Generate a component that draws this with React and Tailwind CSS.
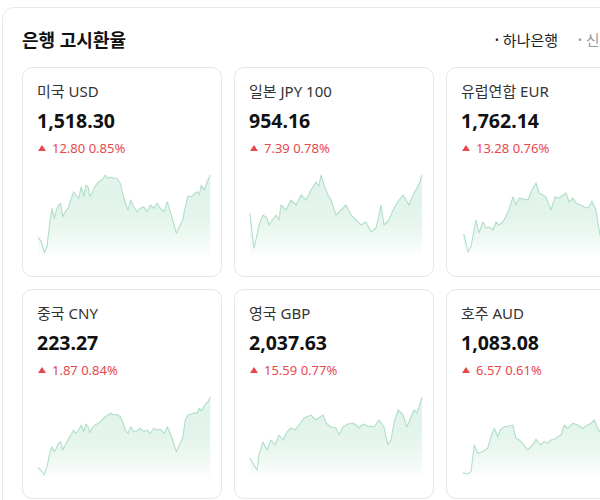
import React from "react";

const T = (pts, fx, fy) => pts.map(([x, y]) => [fx(x), fy(y)]);

const usdZ = [[108,232],[118,245],[127,278],[135,260],[143,190],[150,145],[157,175],[163,150],[170,135],[176,130],[182,170],[190,155],[198,145],[206,120],[215,95],[222,105],[230,115],[238,80],[245,110],[252,75],[258,80],[264,110],[270,100],[278,80],[290,65],[300,60],[310,45],[318,55],[326,52],[334,55],[345,55],[355,70],[362,100],[370,130],[378,150],[386,120],[395,140],[405,155],[415,145],[425,140],[435,155],[445,135],[455,145],[465,130],[475,145],[487,155],[496,125],[505,155],[515,190],[523,220],[532,200],[542,180],[550,140],[558,108],[568,110],[578,100],[586,95],[592,105],[598,75],[605,90],[612,75],[618,60],[625,45]];

const cnyZ = [[108,562],[118,572],[127,585],[135,560],[143,520],[150,500],[157,515],[163,505],[170,490],[176,485],[182,510],[190,495],[198,480],[206,465],[215,450],[222,460],[230,450],[238,435],[245,455],[252,432],[258,440],[264,458],[270,445],[278,435],[290,430],[300,420],[310,410],[318,405],[326,400],[334,405],[345,403],[355,410],[362,425],[370,450],[378,460],[386,440],[395,455],[405,452],[415,445],[425,455],[435,450],[445,460],[455,445],[465,450],[475,448],[487,460],[496,440],[505,460],[515,490],[523,515],[532,495],[542,475],[550,420],[558,405],[568,402],[578,398],[586,400],[592,385],[598,392],[605,380],[612,370],[618,365],[625,350]];

const jpyR = [[249,213],[251,232],[253,248],[256,235],[258,225],[262,215],[266,218],[268,225],[270,222],[275,215],[278,220],[280,205],[285,210],[290,200],[295,205],[300,195],[305,200],[310,190],[315,182],[318,186],[320,175],[323,185],[327,195],[330,200],[335,215],[340,210],[345,205],[350,215],[355,220],[360,225],[365,222],[370,232],[375,228],[378,215],[380,205],[383,225],[388,220],[392,210],[398,200],[402,195],[405,200],[408,205],[412,195],[416,188],[419,182],[421,175]];

const eurR = [[462.7,234],[465,243],[467,252],[470,247],[475,220],[478,233],[482,222],[485,228],[488,227],[492,230],[495,222],[498,225],[502,222],[507,212],[512,197],[515,205],[518,198],[523,199],[527,200],[530,192],[535,183],[538,193],[542,195],[545,197],[550,210],[554,197],[558,198],[562,195],[565,193],[568,202],[572,198],[575,203],[580,205],[585,208],[588,207],[591,201],[595,210],[599,235],[603,228],[607,215],[612,210],[617,205],[622,200],[627,190],[634,182]];

const gbpR = [[249,458],[253,465],[256,470],[258,455],[262,442],[266,450],[270,440],[274,445],[278,435],[282,440],[286,432],[290,428],[294,430],[298,425],[303,418],[310,415],[315,420],[322,415],[325,423],[330,427],[335,428],[338,435],[342,427],[347,424],[352,423],[355,425],[358,428],[362,424],[367,426],[373,427],[378,420],[383,427],[385,437],[387,445],[390,440],[393,423],[397,410],[402,415],[406,427],[410,417],[413,410],[416,413],[418,407],[421,397]];

const audR = [[461.7,472.7],[466.7,474],[470,471.7],[473.3,445],[476.7,453.3],[481.7,451.7],[486.7,448.3],[490,436.7],[493.3,428.3],[496.7,436.7],[499.3,430],[503.3,426.7],[508.3,426],[511.7,425],[515,438.3],[518.3,440],[521.7,443.3],[526.7,450],[531.7,445],[535,439.3],[539.3,445],[543.3,441.7],[546.7,443.3],[550,440],[553.3,439.3],[556.7,436.7],[560,435],[563.3,425],[566.7,428.3],[571.7,423.3],[576.7,425],[581.7,428.3],[586.7,425],[590,423.3],[593.3,420],[596.7,428.3],[600,433.3],[605,425],[610,418],[614,422],[620,408],[626,402],[630,398],[634,392]];

const cards = [
  { name: "미국 USD", value: "1,518.30", diff: "12.80", pct: "0.85%", pts: T(usdZ, (x) => x / 3 - 35, (y) => y / 3) },
  { name: "일본 JPY 100", value: "954.16", diff: "7.39", pct: "0.78%", pts: T(jpyR, (x) => x - 248, (y) => y - 160) },
  { name: "유럽연합 EUR", value: "1,762.14", diff: "13.28", pct: "0.76%", pts: T(eurR, (x) => x - 460, (y) => y - 160) },
  { name: "중국 CNY", value: "223.27", diff: "1.87", pct: "0.84%", pts: T(cnyZ, (x) => x / 3 - 35, (y) => y / 3 - 102) },
  { name: "영국 GBP", value: "2,037.63", diff: "15.59", pct: "0.77%", pts: T(gbpR, (x) => x - 248, (y) => y - 382) },
  { name: "호주 AUD", value: "1,083.08", diff: "6.57", pct: "0.61%", pts: T(audR, (x) => x - 460, (y) => y - 382) },
];

function Chart({ pts, id }) {
  const line = pts.map(([x, y], i) => `${i ? "L" : "M"}${x.toFixed(1)} ${y.toFixed(1)}`).join(" ");
  const first = pts[0];
  const last = pts[pts.length - 1];
  const area = `${line} L${last[0].toFixed(1)} 97 L${first[0].toFixed(1)} 97 Z`;
  return (
    <svg width="175" height="100" viewBox="0 0 175 100" className="block">
      <defs>
        <linearGradient id={id} x1="0" y1="0" x2="0" y2="1">
          <stop offset="0%" stopColor="#a9dec4" stopOpacity="0.32" />
          <stop offset="100%" stopColor="#ffffff" stopOpacity="0.9" />
        </linearGradient>
      </defs>
      <path d={area} fill={`url(#${id})`} />
      <path d={line} fill="none" stroke="#b0dfc8" strokeWidth="1.1" strokeLinejoin="round" />
    </svg>
  );
}

function Card({ c, i }) {
  return (
    <div className="h-[210px] w-[200px] rounded-[10px] border border-[#e6e6e6] bg-white pl-[14px] pt-[13px]">
      <div className="text-[15px] leading-[20px] text-[#333]">{c.name}</div>
      <div className="mt-[6px] text-[19.5px] font-bold leading-[28px] text-[#111]">{c.value}</div>
      <div className="mt-[4px] flex items-center gap-[6px] text-[13px] leading-[18px] text-[#e8484d]">
        <svg width="8" height="6" viewBox="0 0 8 6" className="ml-[1px]">
          <path d="M4 0 L8 6 L0 6 Z" fill="#e8484d" />
        </svg>
        <span>
          {c.diff} {c.pct}
        </span>
      </div>
      <div className="mt-[3px]">
        <Chart pts={c.pts} id={`g${i}`} />
      </div>
    </div>
  );
}

export default function App() {
  return (
    <div
      className="relative h-[500px] w-[600px] overflow-hidden bg-white"
      style={{ fontFamily: '"Noto Sans", "Noto Sans CJK KR", sans-serif' }}
    >
      <div className="ml-[2px] mt-[7px] w-[659px] rounded-[12px] border border-[#e8e8e8] bg-white px-[19px] pt-[19px] pb-[20px]">
        <div className="mb-[14px] flex items-center">
          <div className="text-[18px] font-bold leading-[26px] text-[#111]">은행 고시환율</div>
          <div className="ml-auto flex items-center gap-[20px] text-[15px] leading-[20px]">
            <div className="flex items-center gap-[4px] text-[#222]">
              <span className="text-[10px]">•</span>
              <span>하나은행</span>
            </div>
            <div className="flex items-center gap-[4px] text-[#9a9a9a]">
              <span className="text-[10px]">•</span>
              <span>신한은행</span>
            </div>
          </div>
        </div>
        <div className="grid grid-cols-[200px_200px_200px] gap-[12px]">
          {cards.map((c, i) => (
            <Card key={i} c={c} i={i} />
          ))}
        </div>
      </div>
    </div>
  );
}
